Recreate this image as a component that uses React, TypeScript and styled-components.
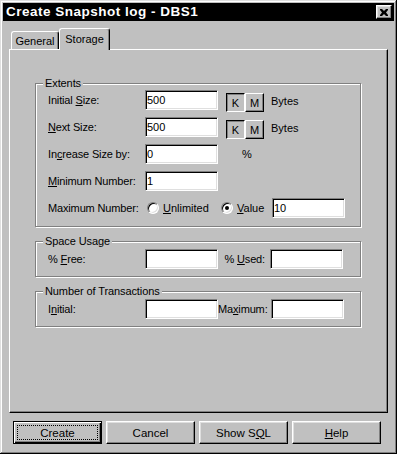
import React from 'react';
import styled, { createGlobalStyle } from 'styled-components';

const Global = createGlobalStyle`
  html, body { margin: 0; padding: 0; background: #c0c0c0; }
  body {
    font-family: "Liberation Sans", Arial, sans-serif;
    font-size: 11px;
    color: #000;
  }
  * { box-sizing: border-box; }
`;

const Window = styled.div`
  width: 397px;
  height: 454px;
  background: #c0c0c0;
  padding: 3px;
  box-shadow: inset -1px -1px #000, inset 1px 1px #dfdfdf, inset -2px -2px #808080, inset 2px 2px #fff;
  display: flex;
  flex-direction: column;
`;

const TitleBar = styled.div`
  height: 18px;
  background: #000;
  color: #fff;
  display: flex;
  align-items: center;
  justify-content: space-between;
  padding: 0 2px 0 3px;
`;

const Title = styled.span`
  font-weight: bold;
  font-size: 13.5px;
  letter-spacing: 0.5px;
  line-height: 18px;
`;

const CloseButton = styled.div`
  width: 16px;
  height: 14px;
  background: #c0c0c0;
  border: 1px solid;
  border-color: #fff #000 #000 #fff;
  box-shadow: inset -1px -1px #808080, inset 1px 1px #dfdfdf;
  display: flex;
  align-items: center;
  justify-content: center;
`;

const TabStrip = styled.div`
  display: flex;
  align-items: flex-end;
  height: 21px;
  margin: 7px 0 0 6px;
  padding-left: 2px;
  position: relative;
  z-index: 1;
`;

const Tab = styled.div<{ $active?: boolean; $w: number }>`
  width: ${p => p.$w}px;
  height: ${p => (p.$active ? 22 : 18)}px;
  margin-bottom: ${p => (p.$active ? -1 : 0)}px;
  background: #c0c0c0;
  border-top: 1px solid #fff;
  border-left: 1px solid #fff;
  border-right: 1px solid #000;
  border-radius: 3px 3px 0 0;
  box-shadow: inset -1px 0 #808080;
  display: flex;
  align-items: center;
  justify-content: center;
  font-size: 11px;
  padding-bottom: ${p => (p.$active ? 2 : 0)}px;
`;

const Panel = styled.div`
  margin-left: 6px;
  width: 379px;
  height: 364px;
  border-top: 1px solid #fff;
  border-left: 1px solid #fff;
  border-right: 1px solid #000;
  border-bottom: 1px solid #000;
  box-shadow: inset -1px -1px #808080;
  padding: 33px 0 0 25px;
  display: flex;
  flex-direction: column;
  gap: 14px;
`;

const Group = styled.div<{ $pt: number; $pb: number }>`
  position: relative;
  width: 326px;
  border: 1px solid #808080;
  box-shadow: inset 1px 1px #fff, 1px 1px #fff;
  padding: ${p => p.$pt}px 0 ${p => p.$pb}px 12px;
  display: flex;
  flex-direction: column;
  gap: 7px;
`;

const GroupLabel = styled.span`
  position: absolute;
  top: -7px;
  left: 7px;
  padding: 0 2px;
  line-height: 13px;
  background: #c0c0c0;
  letter-spacing: -0.1px;
`;

const Row = styled.div`
  display: flex;
  align-items: center;
  height: 20px;
`;

const Label = styled.span<{ $w: number; $right?: boolean }>`
  width: ${p => p.$w}px;
  flex: none;
  text-align: ${p => (p.$right ? 'right' : 'left')};
  padding-right: ${p => (p.$right ? 5 : 0)}px;
  white-space: nowrap;
  letter-spacing: -0.15px;
`;

const Field = styled.input`
  width: 73px;
  height: 20px;
  flex: none;
  margin: 0;
  padding: 0 1px;
  background: #fff;
  border: 1px solid;
  border-color: #808080 #fff #fff #808080;
  box-shadow: inset 1px 1px #000, inset -1px -1px #dfdfdf;
  font-family: inherit;
  font-size: 11px;
  color: #000;
  outline: none;
`;

const Toggles = styled.div`
  display: flex;
  align-self: flex-start;
  margin: 3px 0 0 8px;
`;

const Toggle = styled.div<{ $pressed?: boolean }>`
  width: 19px;
  height: 19px;
  border: 1px solid;
  border-color: ${p => (p.$pressed ? '#000 #fff #fff #000' : '#fff #000 #000 #fff')};
  box-shadow: ${p => (p.$pressed ? 'inset 1px 1px #808080' : 'inset -1px -1px #808080')};
  display: flex;
  align-items: center;
  justify-content: center;
  padding-top: ${p => (p.$pressed ? 1 : 0)}px;
`;

const Unit = styled.span<{ $ml: number }>`
  margin-left: ${p => p.$ml}px;
  align-self: flex-start;
  margin-top: 5px;
`;

const Percent = styled.span`
  margin-left: 24px;
`;

const RadioOption = styled.label<{ $w: number }>`
  width: ${p => p.$w}px;
  flex: none;
  display: flex;
  align-items: center;
  gap: 4px;
`;

const RadioDot = styled.span<{ $checked?: boolean }>`
  width: 12px;
  height: 12px;
  flex: none;
  border-radius: 50%;
  background: #fff;
  border: 1px solid;
  border-color: #808080 #fff #fff #808080;
  box-shadow: inset 1px 1px #000, inset -1px -1px #dfdfdf;
  display: flex;
  align-items: center;
  justify-content: center;
  &::after {
    content: '';
    width: 4px;
    height: 4px;
    border-radius: 50%;
    background: ${p => (p.$checked ? '#000' : 'transparent')};
  }
`;

const Acc = styled.span`
  text-decoration: underline;
`;

const ButtonRow = styled.div`
  display: flex;
  gap: 4px;
  margin: 8px 0 0 10px;
`;

const Button = styled.div<{ $default?: boolean }>`
  width: 89px;
  height: 23px;
  display: flex;
  align-items: stretch;
  padding: 3px;
  border: 1px solid;
  border-color: ${p => (p.$default ? '#000' : '#fff #000 #000 #fff')};
  box-shadow: ${p =>
    p.$default
      ? 'inset 1px 1px #fff, inset -1px -1px #000, inset -2px -2px #808080'
      : 'inset -1px -1px #808080, inset 1px 1px #dfdfdf'};
`;

const ButtonText = styled.span<{ $focus?: boolean }>`
  flex: 1;
  display: flex;
  align-items: center;
  justify-content: center;
  border: 1px dotted ${p => (p.$focus ? '#000' : 'transparent')};
  font-size: 11.5px;
`;

export default function App() {
  return (
    <>
      <Global />
      <Window>
        <TitleBar>
          <Title>Create Snapshot log - DBS1</Title>
          <CloseButton>
            <svg width="8" height="7" viewBox="0 0 8 7">
              <path d="M0 0h2l2 2 2-2h2v1L6 3.5 8 6v1H6L4 5 2 7H0V6l2-2.5L0 1z" fill="#000" />
            </svg>
          </CloseButton>
        </TitleBar>

        <TabStrip>
          <Tab $w={48}>General</Tab>
          <Tab $w={51} $active>Storage</Tab>
        </TabStrip>

        <Panel>
          <Group $pt={6} $pb={8}>
            <GroupLabel>Extents</GroupLabel>
            <Row>
              <Label $w={97}>Initial <Acc>S</Acc>ize:</Label>
              <Field defaultValue="500" readOnly />
              <Toggles>
                <Toggle $pressed>K</Toggle>
                <Toggle>M</Toggle>
              </Toggles>
              <Unit $ml={7}>Bytes</Unit>
            </Row>
            <Row>
              <Label $w={97}><Acc>N</Acc>ext Size:</Label>
              <Field defaultValue="500" readOnly />
              <Toggles>
                <Toggle $pressed>K</Toggle>
                <Toggle>M</Toggle>
              </Toggles>
              <Unit $ml={7}>Bytes</Unit>
            </Row>
            <Row>
              <Label $w={97}>In<Acc>c</Acc>rease Size by:</Label>
              <Field defaultValue="0" readOnly />
              <Percent>%</Percent>
            </Row>
            <Row>
              <Label $w={97}><Acc>M</Acc>inimum Number:</Label>
              <Field defaultValue="1" readOnly />
            </Row>
            <Row>
              <Label $w={99}>Maximum Number:</Label>
              <RadioOption $w={74}>
                <RadioDot />
                <span><Acc>U</Acc>nlimited</span>
              </RadioOption>
              <RadioOption $w={51}>
                <RadioDot $checked />
                <span><Acc>V</Acc>alue</span>
              </RadioOption>
              <Field defaultValue="10" readOnly />
            </Row>
          </Group>

          <Group $pt={7} $pb={7}>
            <GroupLabel>Space Usage</GroupLabel>
            <Row>
              <Label $w={97}>% <Acc>F</Acc>ree:</Label>
              <Field defaultValue="" readOnly />
              <Label $w={52} $right>% <Acc>U</Acc>sed:</Label>
              <Field defaultValue="" readOnly />
            </Row>
          </Group>

          <Group $pt={7} $pb={7}>
            <GroupLabel>Number of Transactions</GroupLabel>
            <Row>
              <Label $w={97}>I<Acc>n</Acc>itial:</Label>
              <Field defaultValue="" readOnly />
              <Label $w={53} $right>Ma<Acc>x</Acc>imum:</Label>
              <Field defaultValue="" readOnly />
            </Row>
          </Group>
        </Panel>

        <ButtonRow>
          <Button $default>
            <ButtonText $focus>Create</ButtonText>
          </Button>
          <Button>
            <ButtonText>Cancel</ButtonText>
          </Button>
          <Button>
            <ButtonText>Show S<Acc>Q</Acc>L</ButtonText>
          </Button>
          <Button>
            <ButtonText><Acc>H</Acc>elp</ButtonText>
          </Button>
        </ButtonRow>
      </Window>
    </>
  );
}
